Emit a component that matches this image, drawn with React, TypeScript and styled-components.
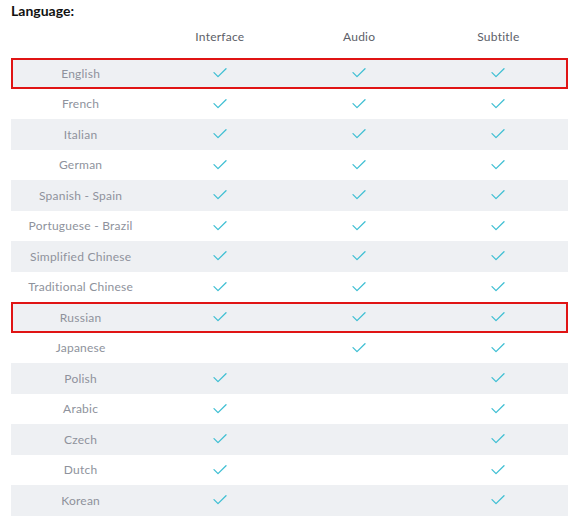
import React from 'react';
import styled, {createGlobalStyle} from "styled-components";

type LangRowType = {
    name: string
    interface: boolean
    audio: boolean
    subtitle: boolean
    marked?: boolean
}

const rows: LangRowType[] = [
    {name: 'English', interface: true, audio: true, subtitle: true, marked: true},
    {name: 'French', interface: true, audio: true, subtitle: true},
    {name: 'Italian', interface: true, audio: true, subtitle: true},
    {name: 'German', interface: true, audio: true, subtitle: true},
    {name: 'Spanish - Spain', interface: true, audio: true, subtitle: true},
    {name: 'Portuguese - Brazil', interface: true, audio: true, subtitle: true},
    {name: 'Simplified Chinese', interface: true, audio: true, subtitle: true},
    {name: 'Traditional Chinese', interface: true, audio: true, subtitle: true},
    {name: 'Russian', interface: true, audio: true, subtitle: true, marked: true},
    {name: 'Japanese', interface: false, audio: true, subtitle: true},
    {name: 'Polish', interface: true, audio: false, subtitle: true},
    {name: 'Arabic', interface: true, audio: false, subtitle: true},
    {name: 'Czech', interface: true, audio: false, subtitle: true},
    {name: 'Dutch', interface: true, audio: false, subtitle: true},
    {name: 'Korean', interface: true, audio: false, subtitle: true},
]

const Check = () => (
    <svg width="14" height="10" viewBox="0 0 14 10" fill="none">
        <path d="M1 4.6 L5 8.6 L13 0.8" stroke="#3fbfd3" strokeWidth="1.3" strokeLinecap="round" strokeLinejoin="round"/>
    </svg>
)

export default function App() {
    return (
        <>
            <GlobalStyle/>
            <StyleLanguages>
                <Title>Language:</Title>
                <Table>
                    <HeadRow>
                        <HeadCell/>
                        <HeadCell>Interface</HeadCell>
                        <HeadCell>Audio</HeadCell>
                        <HeadCell>Subtitle</HeadCell>
                    </HeadRow>
                    {rows.map((r, i) => (
                        <Row key={r.name} $striped={i % 2 === 0} $marked={!!r.marked}>
                            <NameCell>{r.name}</NameCell>
                            <Cell>{r.interface && <Check/>}</Cell>
                            <Cell>{r.audio && <Check/>}</Cell>
                            <Cell>{r.subtitle && <Check/>}</Cell>
                        </Row>
                    ))}
                </Table>
            </StyleLanguages>
        </>
    );
}

const GlobalStyle = createGlobalStyle`
    body {
        margin: 0;
        background: #fff;
        font-family: "Lato", "Noto Sans", sans-serif;
    }
    `
const StyleLanguages = styled.div`
    width: 557px;
    padding: 3px 0 0 11px;
    `
const Title = styled.div`
    font-size: 14px;
    font-weight: 700;
    color: #111;
    height: 18px;
    line-height: 16px;
    `
const Table = styled.div`
    display: flex;
    flex-direction: column;
    `
const HeadRow = styled.div`
    display: grid;
    grid-template-columns: repeat(4, 1fr);
    height: 37px;
    padding-bottom: 7px;
    box-sizing: border-box;
    align-items: center;
    `
const HeadCell = styled.div`
    text-align: center;
    font-size: 12px;
    color: #5c6068;
    letter-spacing: 0.02em;
    `
const Row = styled.div<{ $striped: boolean, $marked: boolean }>`
    display: grid;
    grid-template-columns: repeat(4, 1fr);
    height: 30.5px;
    align-items: center;
    background: ${props => props.$striped ? '#eef0f3' : '#fff'};
    box-shadow: ${props => props.$marked ? 'inset 0 0 0 2px #e01414' : 'none'};
    `
const NameCell = styled.div`
    text-align: center;
    font-size: 12px;
    color: #8e929c;
    letter-spacing: 0.02em;
    `
const Cell = styled.div`
    display: flex;
    justify-content: center;
    align-items: center;
    svg {
        display: block;
    }
    `
